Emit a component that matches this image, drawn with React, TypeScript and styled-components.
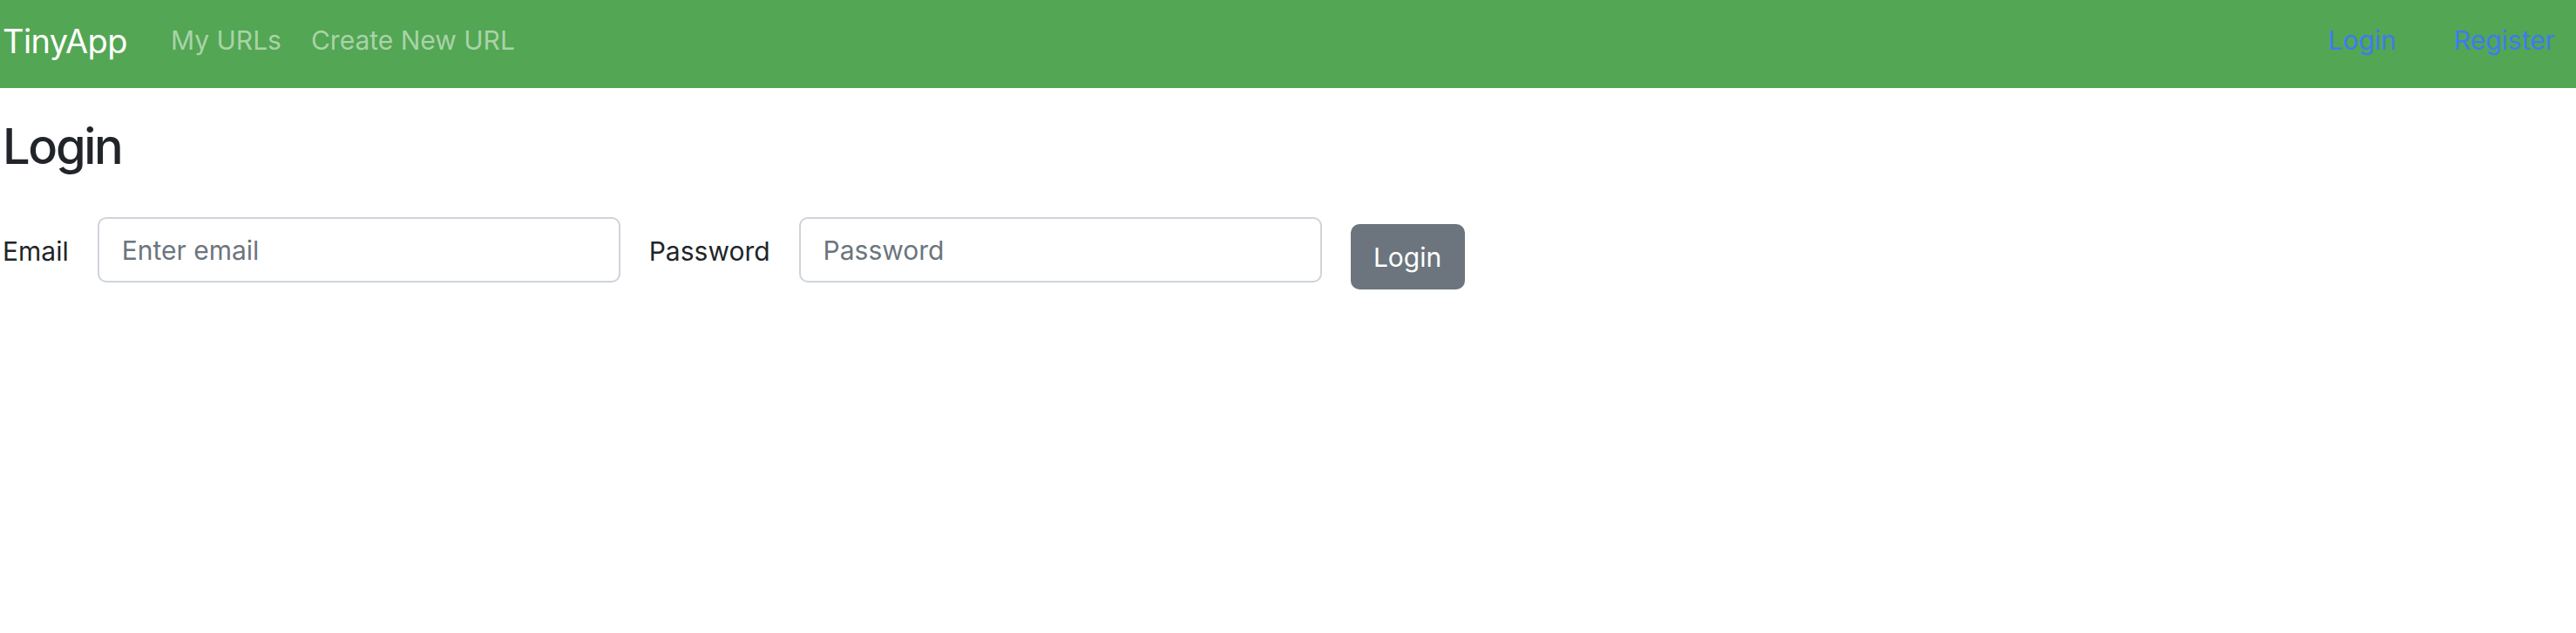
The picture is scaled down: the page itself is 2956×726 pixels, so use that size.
import React from "react";
import styled, { createGlobalStyle } from "styled-components";

const GlobalStyle = createGlobalStyle`
  html, body {
    margin: 0;
    padding: 0;
    background: #ffffff;
    font-family: Inter, "Liberation Sans", sans-serif;
    color: #212529;
  }
  * { box-sizing: border-box; }
`;

const Navbar = styled.nav`
  height: 101px;
  background: #53a653;
  display: flex;
  align-items: flex-start;
  justify-content: space-between;
  padding: 24px 24px 0 3px;
`;

const NavGroup = styled.div<{ $gap: number }>`
  display: flex;
  align-items: flex-start;
  gap: ${(p) => p.$gap}px;
`;

const Brand = styled.a`
  font-size: 38px;
  line-height: 46px;
  color: #ffffff;
  text-decoration: none;
  margin-right: 16px;
  letter-spacing: -0.6px;
`;

const NavLink = styled.a<{ $tone: "muted" | "blue" }>`
  font-size: 30px;
  line-height: 45px;
  text-decoration: none;
  color: ${(p) => (p.$tone === "blue" ? "#3d7bf0" : "#a9d3a9")};
`;

const Main = styled.main`
  padding: 0 3px;
`;

const Heading = styled.h2`
  margin: 33px 0 0;
  font-size: 56px;
  line-height: 68px;
  font-weight: 550;
  letter-spacing: -2.3px;
  color: #212529;
`;

const Form = styled.form`
  display: flex;
  align-items: flex-start;
  gap: 33px;
  margin-top: 47px;
`;

const Label = styled.label`
  font-size: 30px;
  line-height: 75px;
  padding-top: 2px;
  color: #212529;
`;

const Input = styled.input`
  width: 600px;
  height: 75px;
  border: 2px solid #ced4da;
  border-radius: 10px;
  padding: 0 26px;
  font-family: Inter, "Liberation Sans", sans-serif;
  font-size: 30px;
  color: #212529;
  background: #ffffff;
  outline: none;
  &::placeholder {
    color: #6c757d;
  }
`;

const Button = styled.button`
  margin-top: 8px;
  width: 131px;
  height: 75px;
  border: none;
  border-radius: 10px;
  background: #6c757d;
  color: #ffffff;
  font-family: Inter, "Liberation Sans", sans-serif;
  font-size: 30px;
  cursor: pointer;
`;

export default function App() {
  return (
    <>
      <GlobalStyle />
      <Navbar>
        <NavGroup $gap={34}>
          <Brand href="#">TinyApp</Brand>
          <NavLink $tone="muted" href="#">My URLs</NavLink>
          <NavLink $tone="muted" href="#">Create New URL</NavLink>
        </NavGroup>
        <NavGroup $gap={66}>
          <NavLink $tone="blue" href="#">Login</NavLink>
          <NavLink $tone="blue" href="#">Register</NavLink>
        </NavGroup>
      </Navbar>
      <Main>
        <Heading>Login</Heading>
        <Form onSubmit={(e) => e.preventDefault()}>
          <Label htmlFor="email">Email</Label>
          <Input id="email" type="email" placeholder="Enter email" />
          <Label htmlFor="password">Password</Label>
          <Input id="password" type="password" placeholder="Password" />
          <Button type="submit">Login</Button>
        </Form>
      </Main>
    </>
  );
}
